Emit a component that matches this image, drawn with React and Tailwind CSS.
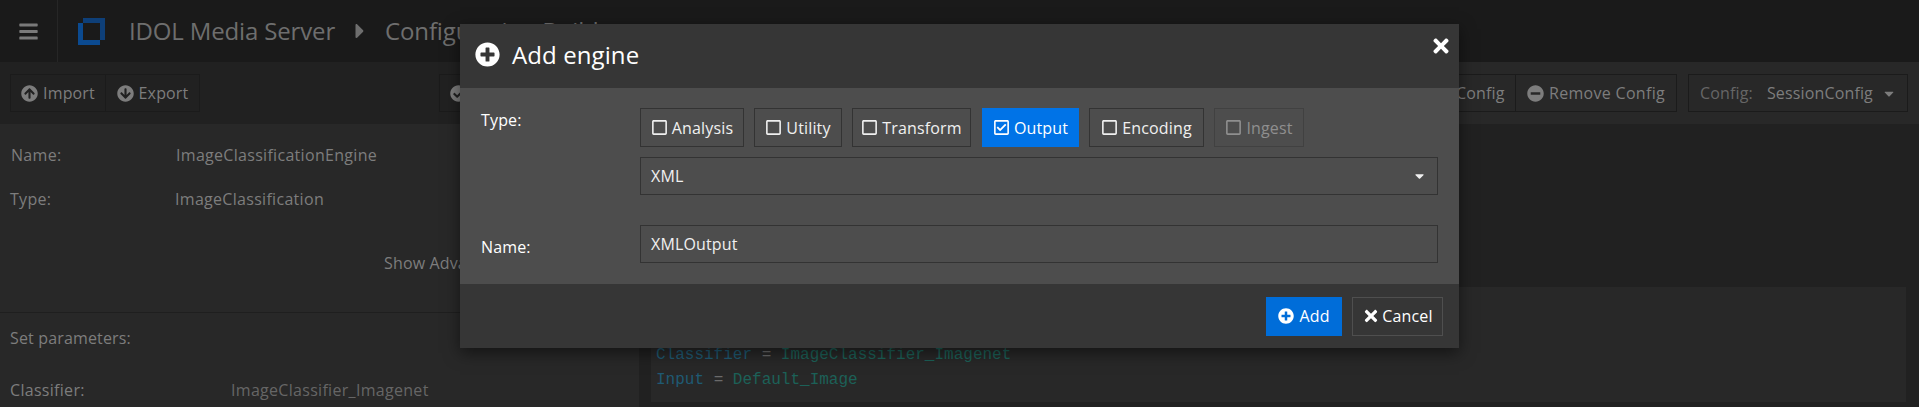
import React from "react";
import { FaCheckCircle, FaPlusCircle, FaMinusCircle, FaArrowCircleUp, FaArrowCircleDown, FaBars, FaTimes, FaRegSquare, FaRegCheckSquare, FaCaretRight, FaCaretDown } from "react-icons/fa";

function TypeBtn({ label, checked, disabled, w }) {
  const tone = checked
    ? "bg-[#0073e7] border-[#0073e7] text-white"
    : disabled
    ? "border-[#414141] text-[#8f8f8f]"
    : "border-[#333333] text-[#f0f0f0]";
  return (
    <div className={`flex h-[39px] items-center justify-center gap-[4px] border text-[16px] ${tone} ${w}`}>
      {checked ? <FaRegCheckSquare className="h-[17px] w-[17px]" /> : <FaRegSquare className="h-[17px] w-[17px]" />}
      <span>{label}</span>
    </div>
  );
}

function ToolBtn({ icon, label, w }) {
  return (
    <div className={`flex h-full items-center justify-center gap-[5px] ${w}`}>
      {icon}
      <span>{label}</span>
    </div>
  );
}

export default function App() {
  return (
    <div className="relative h-[407px] w-[1919px] overflow-hidden bg-[#282828] text-[16px] tracking-[0.15px] text-[#7d7d7d] [font-family:'Open_Sans',sans-serif]">
      <header className="flex h-[62px] items-center bg-[#1a1a1a]">
        <div className="flex h-full w-[58px] items-center justify-center border-r border-[#262626]">
          <FaBars className="h-[21px] w-[21px] text-[#7a7a7a]" />
        </div>
        <svg className="ml-[20px] h-[27px] w-[27px]" viewBox="0 0 27 27">
          <path d="M5 0H27V22H22V5H5Z" fill="#0e3f78" />
          <path d="M0 5H5V22H22V27H0Z" fill="#0b4a90" />
        </svg>
        <div className="ml-[24px] flex items-center text-[24px] tracking-[-0.15px] text-[#6e6e6e]">
          <span>IDOL Media Server</span>
          <FaCaretRight className="mx-[18px] h-[24px] w-[14px]" />
          <span>Configuration Builder</span>
        </div>
      </header>

      <div className="flex h-[62px]">
        <div className="flex w-[639px] items-center bg-[#212121] pl-[10px]">
          <div className="flex h-[38px] items-center border border-[#1b1b1b]">
            <ToolBtn w="w-[95px] border-r border-[#1b1b1b]" label="Import" icon={<FaArrowCircleUp className="h-[17px] w-[17px]" />} />
            <ToolBtn w="w-[93px]" label="Export" icon={<FaArrowCircleDown className="h-[17px] w-[17px]" />} />
          </div>
          <div className="ml-[239px] flex h-[38px] w-[150px] items-center border border-[#1b1b1b] pl-[10px]">
            <FaCheckCircle className="h-[17px] w-[17px]" />
          </div>
        </div>
        <div className="flex flex-1 items-center justify-end bg-[#282828] pr-[11px]">
          <div className="flex h-[38px] items-center border border-[#1b1b1b]">
            <ToolBtn w="w-[141px] pl-[14px] border-r border-[#1b1b1b]" label="Add Config" icon={<FaPlusCircle className="h-[17px] w-[17px]" />} />
            <ToolBtn w="w-[160px] tracking-[0.3px]" label="Remove Config" icon={<FaMinusCircle className="h-[17px] w-[17px]" />} />
          </div>
          <div className="ml-[11px] flex h-[38px] w-[220px] items-center border border-[#1b1b1b] pl-[11px]">
            <span className="text-[#666666]">Config:</span>
            <span className="ml-[14px]">SessionConfig</span>
            <FaCaretDown className="ml-[10px] h-[15px] w-[12px]" />
          </div>
        </div>
      </div>

      <main className="flex h-[283px]">
        <section className="flex w-[639px] flex-col pt-[9px]">
          <div className="flex h-[44px] items-center pl-[11px] tracking-[0.3px]">
            <span className="w-[165px]">Name:</span>
            <span>ImageClassificationEngine</span>
          </div>
          <div className="flex h-[44px] items-center pl-[10px] tracking-[0.3px]">
            <span className="w-[165px]">Type:</span>
            <span>ImageClassification</span>
          </div>
          <div className="flex h-[84px] items-center pl-[384px]">Show Advanced Options</div>
          <div className="mt-[7px] border-t border-[#1f1f1f] pl-[10px] pt-[13px]">Set parameters:</div>
          <div className="mt-[28px] flex items-center pl-[10px] tracking-[0.3px]">
            <span className="w-[221px]">Classifier:</span>
            <span className="text-[#666666]">ImageClassifier_Imagenet</span>
          </div>
        </section>
        <section className="flex flex-1 items-end bg-[#212121] pb-[5px] pl-[12px] pr-[13px]">
          <div className="flex h-[115px] flex-1 flex-col justify-end bg-[#282828] pb-[9px] pl-[5px] text-[16px] leading-[25px] tracking-normal [font-family:'Liberation_Mono',monospace]">
            <div><span className="text-[#1f5a73]">Classifier</span> <span className="text-[#6a6a6a]">=</span> <span className="text-[#1c6158]">ImageClassifier_Imagenet</span></div>
            <div><span className="text-[#1f5a73]">Input</span> <span className="text-[#6a6a6a]">=</span> <span className="text-[#1c6158]">Default_Image</span></div>
          </div>
        </section>
      </main>

      <div className="absolute left-[460px] top-[24px] flex h-[324px] w-[999px] flex-col bg-[#363636] text-white shadow-[0_5px_15px_rgba(0,0,0,0.5)]">
        <div className="relative flex h-[64px] items-center pb-[3px] pl-[15px]">
          <FaPlusCircle className="h-[25px] w-[25px]" />
          <span className="ml-[12px] text-[24px] tracking-[0.1px]">Add engine</span>
          <FaTimes className="absolute right-[7px] top-[11px] h-[22px] w-[22px]" />
        </div>
        <div className="flex h-[196px] bg-[#4d4d4d] pl-[21px] pr-[21px]">
          <div className="flex w-[159px] flex-col">
            <span className="mt-[20px]">Type:</span>
            <span className="mt-[103px]">Name:</span>
          </div>
          <div className="flex flex-1 flex-col pt-[20px]">
            <div className="flex gap-[10px]">
              <TypeBtn label="Analysis" w="w-[104px]" />
              <TypeBtn label="Utility" w="w-[88px]" />
              <TypeBtn label="Transform" w="w-[119px]" />
              <TypeBtn label="Output" checked w="ml-px w-[97px]" />
              <TypeBtn label="Encoding" w="w-[115px]" />
              <TypeBtn label="Ingest" disabled w="w-[90px]" />
            </div>
            <div className="mt-[10px] flex h-[38px] items-center justify-between border border-[#333333] pl-[10px] pr-[12px] text-[#f0f0f0]">
              <span>XML</span>
              <FaCaretDown className="h-[14px] w-[11px]" />
            </div>
            <div className="mt-[30px] flex h-[38px] items-center border border-[#333333] pl-[10px] text-[#f0f0f0]">XMLOutput</div>
          </div>
        </div>
        <div className="flex flex-1 items-center justify-end gap-[10px] pr-[16px]">
          <div className="flex h-[39px] w-[76px] items-center justify-center gap-[5px] bg-[#006dd9]">
            <FaPlusCircle className="h-[16px] w-[16px]" />
            <span>Add</span>
          </div>
          <div className="flex h-[39px] w-[91px] items-center justify-center gap-[2px] border border-[#4f4f4f]">
            <FaTimes className="h-[18px] w-[18px]" />
            <span>Cancel</span>
          </div>
        </div>
      </div>
    </div>
  );
}
